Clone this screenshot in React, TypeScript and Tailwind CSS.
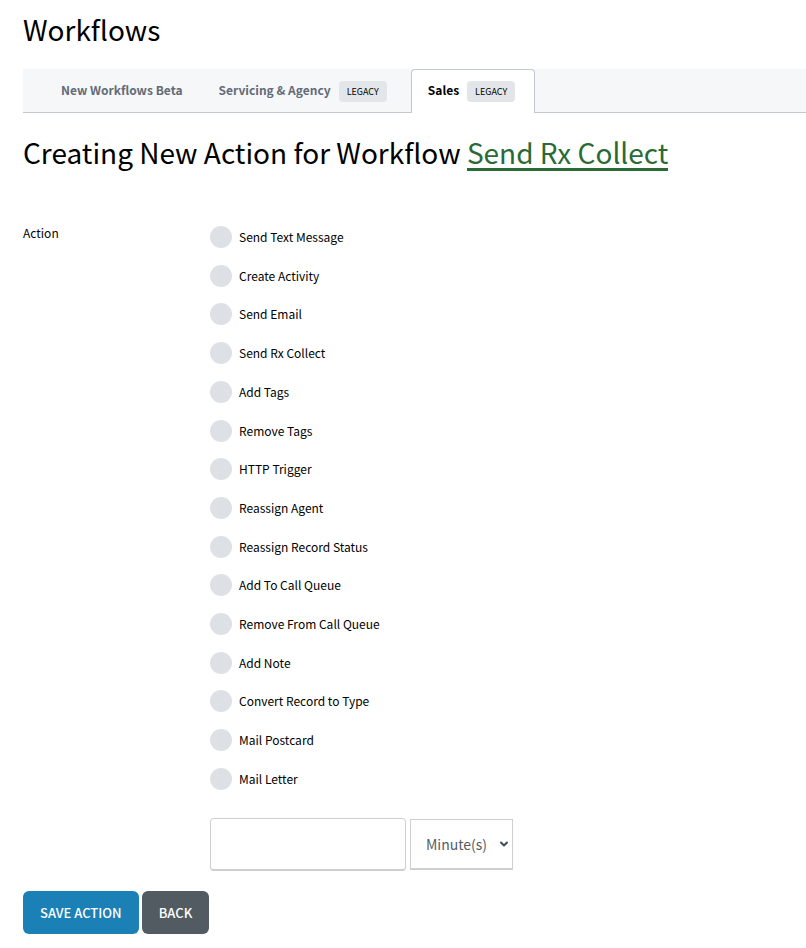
import { ChevronDown } from 'lucide-react'

const actions = [
  'Send Text Message',
  'Create Activity',
  'Send Email',
  'Send Rx Collect',
  'Add Tags',
  'Remove Tags',
  'HTTP Trigger',
  'Reassign Agent',
  'Reassign Record Status',
  'Add To Call Queue',
  'Remove From Call Queue',
  'Add Note',
  'Convert Record to Type',
  'Mail Postcard',
  'Mail Letter',
]

const LegacyBadge = () => (
  <span className="ml-2 rounded bg-[#e2e6e9] px-2 text-[9px] leading-[21px] font-normal text-black">
    LEGACY
  </span>
)

const Tabs = () => (
  <nav className="mt-[22px] flex h-11 border-b border-[#c3c8d0] bg-[#f6f7f9] pl-[22px] text-xs leading-[18px] font-bold text-[#636b78]">
    <a href="#beta" className="flex items-start px-4 pt-3">
      New Workflows Beta
    </a>
    <a href="#servicing" className="ml-1 flex items-start px-4 pt-3">
      Servicing &amp; Agency
      <LegacyBadge />
    </a>
    <a
      href="#sales"
      aria-current="page"
      className="-mb-px ml-2 flex items-start rounded-t border border-b-0 border-[#c3c8d0] bg-white pt-[11px] pr-[19px] pl-4 text-black"
    >
      Sales
      <LegacyBadge />
    </a>
  </nav>
)

const ActionOption = ({ label }: { label: string }) => (
  <label className="flex items-center gap-[7px] text-xs leading-[22px]">
    <input
      type="radio"
      name="action"
      value={label}
      className="size-[22px] appearance-none rounded-full bg-[#dde1e6] checked:bg-[#1a80b6]"
    />
    {label}
  </label>
)

const Delay = () => (
  <div className="mt-7 flex items-center gap-1">
    <input
      type="text"
      aria-label="Delay"
      className="h-[53px] w-[196px] rounded border border-b-2 border-[#cfcfcf] px-4 text-base"
    />
    <div className="relative">
      <select
        aria-label="Delay unit"
        className="h-[51px] w-[103px] appearance-none border border-b-2 border-[#cfcfcf] bg-white pl-[15px] text-sm text-[#555c66]"
      >
        <option>Minute(s)</option>
        <option>Hour(s)</option>
        <option>Day(s)</option>
      </select>
      <ChevronDown
        className="pointer-events-none absolute top-[19px] right-[3px] size-3 text-[#454c56]"
        strokeWidth={4}
      />
    </div>
  </div>
)

export default function App() {
  return (
    <main className="min-h-screen bg-white pb-3 pl-[23px] font-['Noto_Sans_CJK_SC','Noto_Sans',sans-serif] text-black">
      <h1 className="pt-3 text-[28px] leading-[35px]">Workflows</h1>
      <Tabs />
      <h2 className="mt-[21px] text-[28px] leading-[36px]">
        Creating New Action for Workflow{' '}
        <a
          href="#workflow"
          className="inline-block border-b-3 border-[#2a6a35] leading-[31px] text-[#2a6a35]"
        >
          Send Rx Collect
        </a>
      </h2>
      <form>
        <fieldset aria-labelledby="action-label" className="mt-[55px] flex">
          <div id="action-label" className="w-[187px] shrink-0 text-xs leading-[14px]">
            Action
          </div>
          <div className="grow">
            <div className="flex h-[564px] flex-col items-start justify-between">
              {actions.map((label) => (
                <ActionOption key={label} label={label} />
              ))}
            </div>
            <Delay />
          </div>
        </fieldset>
        <div className="mt-5 flex gap-[3px] text-[13px] font-medium text-white">
          <button type="button" className="h-[43px] rounded-md bg-[#1a80b6] px-[17px]">
            SAVE ACTION
          </button>
          <button type="button" className="h-[43px] rounded-md bg-[#525b61] px-[17px]">
            BACK
          </button>
        </div>
      </form>
    </main>
  )
}
